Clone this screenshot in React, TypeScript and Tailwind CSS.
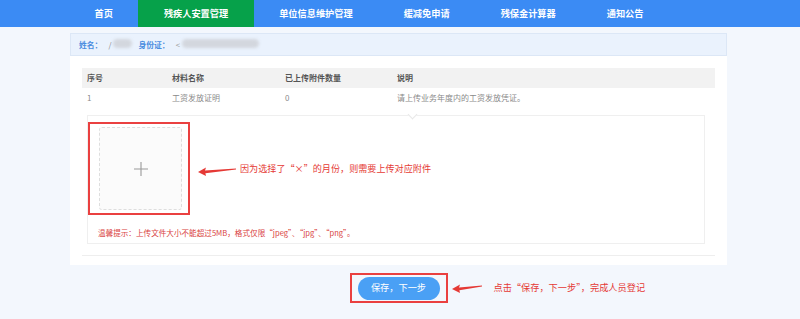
import React from "react";

const NAV = ["首页", "残疾人安置管理", "单位信息维护管理", "缓减免申请", "残保金计算器", "通知公告"];

function RedArrow({ width, className = "" }: { width: number; className?: string }) {
  // tapered arrow pointing left, tail thin on the right
  return (
    <svg width={width} height="12" viewBox={`0 0 ${width} 12`} className={className}>
      <polygon points={`0,7 8,2.5 7,5.6 ${width},3.6 ${width},4.4 7.4,8.2 8,11`} fill="#e53935" />
    </svg>
  );
}

function Blur({ w }: { w: number }) {
  return <span className="inline-block h-[9px] rounded-full bg-[#d3d7de] blur-[1.5px]" style={{ width: w }} />;
}

export default function App() {
  return (
    <div
      className="relative h-[319px] w-[800px] overflow-hidden bg-[#f3f7fd]"
      style={{ fontFamily: '"Noto Sans CJK SC", "Noto Sans", sans-serif' }}
    >
      <nav className="flex h-[27px] bg-[#3b8bf4] pl-[69px]">
        {NAV.map((label, i) => (
          <div
            key={label}
            className={`flex items-center px-[25.5px] text-[9.2px] font-bold text-white ${
              i === 1 ? "bg-[#06a14a]" : ""
            }`}
          >
            {label}
          </div>
        ))}
      </nav>

      <div className="ml-[70px] mt-[6px] flex h-[232px] w-[657px] flex-col bg-white">
        <div className="flex h-[23px] items-center border border-[#dce7f6] bg-[#eaf2fd] pl-[8px] text-[7.8px] font-bold text-[#4a8de0]">
          <span>姓名：</span>
          <span className="ml-[6px] font-normal text-[#888]">/</span>
          <span className="ml-[2px]"><Blur w={19} /></span>
          <span className="ml-[6px]">身份证：</span>
          <span className="ml-[6px] font-normal text-[#999]">&lt;</span>
          <span className="ml-[2px]"><Blur w={77} /></span>
        </div>

        <div className="ml-[12px] mt-[12px] w-[633px] text-[8px]">
          <div className="grid h-[20px] grid-cols-[85px_113px_112px_1fr] items-center bg-[#f2f2f2] pl-[5px] font-bold text-[#555]">
            <span>序号</span>
            <span>材料名称</span>
            <span>已上传附件数量</span>
            <span>说明</span>
          </div>
          <div className="grid h-[20px] grid-cols-[85px_113px_112px_1fr] items-center pl-[5px] text-[#8a8a8a]">
            <span>1</span>
            <span>工资发放证明</span>
            <span>0</span>
            <span>请上传业务年度内的工资发放凭证。</span>
          </div>
        </div>

        <div className="relative ml-[17px] mt-[7px] h-[129px] w-[618px] border border-[#efefef]">
          <span className="absolute left-[321px] top-[-5px] h-[7px] w-[7px] rotate-45 border-b border-r border-[#e8e8e8] bg-white" />
          <div className="mt-[6px] flex items-center">
            <div className="flex h-[93px] w-[102px] items-center border-2 border-[#ea4040] pl-[9px]">
              <div className="flex h-[83px] w-[83px] items-center justify-center rounded-[3px] border border-dashed border-[#dedede] bg-[#fbfbfb]">
                <svg width="14" height="14" viewBox="0 0 14 14">
                  <path d="M7 0V14M0 7H14" stroke="#9a9a9a" strokeWidth="1.1" />
                </svg>
              </div>
            </div>
            <RedArrow width={38} className="ml-[8px] mt-[4px]" />
            <span className="ml-[4px] text-[9.1px] text-[#e53935]">因为选择了“×”的月份，则需要上传对应附件</span>
          </div>
          <p className="ml-[10px] mt-[12px] text-[7.6px] text-[#d9413d]">
            温馨提示：上传文件大小不能超过5MB，格式仅限“jpeg”、“jpg”、“png”。
          </p>
        </div>

        <div className="ml-[12px] mt-[11px] h-px w-[633px] bg-[#eeeeee]" />
      </div>

      <div className="mt-[8px] flex justify-center pr-[2px]">
        <div className="relative">
          <div className="ml-[-1px] flex h-[30px] w-[98px] items-center justify-center border-2 border-[#ea4040]">
            <button
              type="button"
              className="h-[23px] w-[82px] rounded-full bg-[#4aa0f5] text-[9.2px] text-white"
            >
              保存，下一步
            </button>
          </div>
          <div className="absolute left-full top-0 flex h-[30px] items-center">
            <RedArrow width={30} className="ml-[4px]" />
            <span className="ml-[12px] whitespace-nowrap text-[9.2px] text-[#e53935]">点击“保存，下一步”，完成人员登记</span>
          </div>
        </div>
      </div>
    </div>
  );
}
